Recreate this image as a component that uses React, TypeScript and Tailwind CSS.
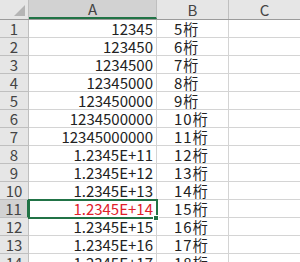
import React from "react";

const rows: [string, string][] = [
  ["12345", "5桁"],
  ["123450", "6桁"],
  ["1234500", "7桁"],
  ["12345000", "8桁"],
  ["123450000", "9桁"],
  ["1234500000", "10桁"],
  ["12345000000", "11桁"],
  ["1.2345E+11", "12桁"],
  ["1.2345E+12", "13桁"],
  ["1.2345E+13", "14桁"],
  ["1.2345E+14", "15桁"],
  ["1.2345E+15", "16桁"],
  ["1.2345E+16", "17桁"],
  ["1.2345E+17", "18桁"],
];

const font = { fontFamily: '"Noto Sans CJK JP", "DejaVu Sans", sans-serif' };

export default function App() {
  return (
    <div
      className="relative w-[300px] h-[262px] overflow-hidden bg-white text-[15px] text-[#222] leading-[17px]"
      style={font}
    >
      {/* header row */}
      <div className="flex h-[20px] bg-[#e6e6e6] border-b border-[#9b9b9b]">
        <div className="relative w-[29px] shrink-0 border-r border-[#bfbfbf]">
          <div className="absolute right-[3px] bottom-[3px] w-0 h-0 border-l-[11px] border-l-transparent border-b-[11px] border-b-[#b5b5b5]" />
        </div>
        <div className="w-[128px] shrink-0 flex items-center justify-center bg-[#d2d2d2] border-r border-[#bfbfbf] border-b-2 border-b-[#217346] text-[#444]">
          A
        </div>
        <div className="w-[72px] shrink-0 flex items-center justify-center border-r border-[#bfbfbf] text-[#444]">
          B
        </div>
        <div className="flex-1 flex items-center justify-center text-[#444]">C</div>
      </div>

      {rows.map(([a, b], i) => {
        const sel = i === 10;
        return (
          <div key={i} className="flex h-[18px]">
            <div
              className={
                "w-[29px] shrink-0 flex items-center justify-center border-b border-[#bfbfbf] " +
                (sel
                  ? "bg-[#d2d2d2] border-r-2 border-r-[#217346] text-[#444]"
                  : "bg-[#e6e6e6] border-r border-r-[#bfbfbf] text-[#444]")
              }
            >
              {i + 1}
            </div>
            <div
              className={
                "w-[128px] shrink-0 flex items-center justify-end pr-[3px] border-r border-b border-[#d4d4d4] " +
                (sel ? "text-[#e0202a]" : "")
              }
            >
              {a}
            </div>
            <div className="w-[72px] shrink-0 flex items-center pl-[17px] tracking-[1px] border-r border-b border-[#d4d4d4]">
              {b}
            </div>
            <div className="flex-1 border-b border-[#d4d4d4]" />
          </div>
        );
      })}

      {/* selection box on A11 */}
      <div className="absolute left-[28px] top-[199px] w-[130px] h-[20px] border-2 border-[#217346] pointer-events-none" />
      <div className="absolute left-[153px] top-[215px] w-[6px] h-[6px] bg-[#217346] border border-white" />
    </div>
  );
}
